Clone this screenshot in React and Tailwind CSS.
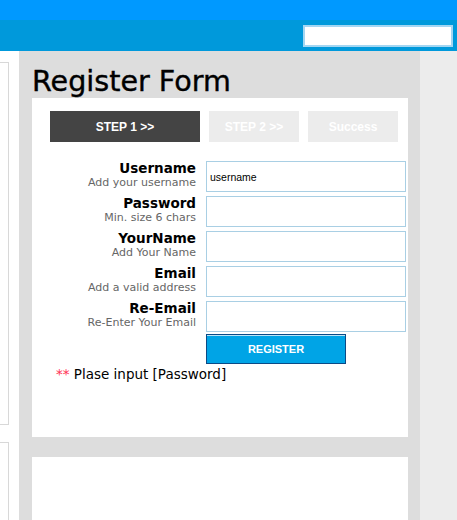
import React from 'react';

const fields = [
  { label: 'Username', hint: 'Add your username', value: 'username' },
  { label: 'Password', hint: 'Min. size 6 chars', value: '' },
  { label: 'YourName', hint: 'Add Your Name', value: '' },
  { label: 'Email', hint: 'Add a valid address', value: '' },
  { label: 'Re-Email', hint: 'Re-Enter Your Email', value: '' },
];

const dejavu = { fontFamily: '"DejaVu Sans", Verdana, sans-serif' };

export default function App() {
  return (
    <div className="w-[457px] h-[520px] overflow-hidden bg-white" style={dejavu}>
      <div className="h-[20px] bg-[#0099ff]" />
      <div className="h-[31px] bg-[#0099db] flex justify-end pt-[5px] pr-[4px]">
        <input className="w-[150px] h-[22px] bg-white border-2 border-[#a3d6f2] outline-none" />
      </div>

      <div className="flex h-[469px]">
        {/* left column */}
        <div className="w-[19px] bg-white pt-[11px] flex flex-col gap-[17px]">
          <div className="w-[9px] h-[374px] border-r border-t border-b border-[#d8d8d8]" />
          <div className="w-[9px] h-[80px] border-r border-t border-[#d8d8d8]" />
        </div>

        {/* main */}
        <div className="w-[401px] bg-[#dddddd] pl-[13px] pr-[12px]">
          <div className="h-[47px] pt-[16px] text-[28.6px] leading-[28px] text-black [-webkit-text-stroke:0.4px_black]">Register Form</div>

          <div className="bg-white h-[339px] pt-[13px] pl-[18px]">
            <div className="flex gap-[9px] text-white text-[12px] font-bold" style={{ fontFamily: '"Liberation Sans", Arial, sans-serif' }}>
              <div className="w-[150px] h-[31px] bg-[#444444] flex items-center justify-center">STEP 1 &gt;&gt;</div>
              <div className="w-[90px] h-[31px] bg-[#ececec] flex items-center justify-center">STEP 2 &gt;&gt;</div>
              <div className="w-[90px] h-[31px] bg-[#ececec] flex items-center justify-center">Success</div>
            </div>

            <div className="mt-[19px] flex flex-col gap-[4px]">
              {fields.map((f) => (
                <div key={f.label} className="flex h-[31px] gap-[10px]">
                  <div className="w-[146px] text-right">
                    <div className="text-[13.5px] leading-[15px] font-bold text-black">{f.label}</div>
                    <div className="text-[11px] leading-[13px] text-[#666666]">{f.hint}</div>
                  </div>
                  <input
                    defaultValue={f.value}
                    className="w-[200px] h-[31px] border border-[#a9cfe4] bg-white px-[3px] text-[10.5px] text-black outline-none"
                    style={{ fontFamily: '"Liberation Sans", Arial, sans-serif' }}
                  />
                </div>
              ))}
            </div>

            <button
              className="ml-[156px] mt-[2px] w-[140px] h-[30px] bg-[#00a4e6] border border-[#0b4a86] shadow-[inset_0_1px_0_#b8e4f8] text-white text-[11px] font-bold"
              style={{ fontFamily: '"Liberation Sans", Arial, sans-serif' }}
            >
              REGISTER
            </button>

            <div className="ml-[6px] mt-[2px] text-[13.5px] leading-[16px] text-black">
              <span className="text-[#ff3355]">**</span> Plase input [Password]
            </div>
          </div>

          <div className="bg-white h-[100px] mt-[20px]" />
        </div>

        {/* right */}
        <div className="flex-1 bg-[#ececec]" />
      </div>
    </div>
  );
}
